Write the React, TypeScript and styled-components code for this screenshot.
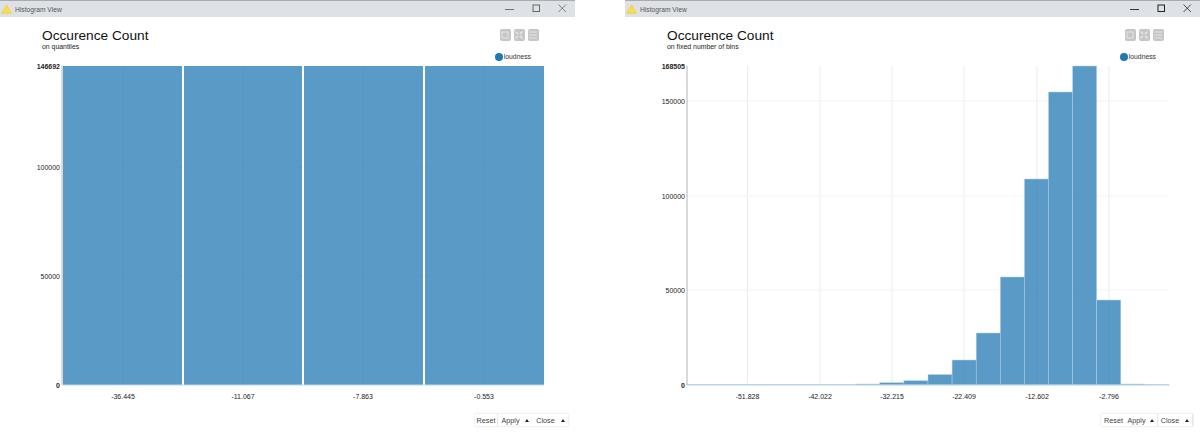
import React from 'react'
import styled, { createGlobalStyle } from 'styled-components'

type Bar = { x: number; width: number; top: number }
type Tick = { label: string; pos: number; bold?: boolean; line?: boolean }

const BOTTOM = 385

const quantileBars: Bar[] = [
    { x: 63, width: 119, top: 66 },
    { x: 184, width: 118, top: 66 },
    { x: 304, width: 119, top: 66 },
    { x: 425, width: 119, top: 66 },
]

const binTops = [384.6, 384.6, 384.6, 384.6, 384.6, 384.6, 384.6, 384, 382.7, 380.7, 374.5, 360, 333, 277, 179, 92, 66, 300, 384, 384.6]
const binBars: Bar[] = binTops.map((top, i) => ({ x: 62 + i * 24.1, width: 24.1, top }))

const charts = {
    quantiles: {
        title: 'on quantiles',
        bars: quantileBars,
        gap: true,
        gridEnd: 544,
        yTicks: [
            { label: '146692', pos: 66, bold: true },
            { label: '100000', pos: 167, line: true },
            { label: '50000', pos: 276, line: true },
            { label: '0', pos: 385, bold: true },
        ] as Tick[],
        xTicks: [
            { label: '-36.445', pos: 123 },
            { label: '-11.067', pos: 243 },
            { label: '-7.863', pos: 363 },
            { label: '-0.553', pos: 484 },
        ] as Tick[],
    },
    bins: {
        title: 'on fixed number of bins',
        bars: binBars,
        gap: false,
        gridEnd: 544,
        yTicks: [
            { label: '168505', pos: 66, bold: true },
            { label: '150000', pos: 101, line: true },
            { label: '100000', pos: 196, line: true },
            { label: '50000', pos: 290, line: true },
            { label: '0', pos: 385, bold: true },
        ] as Tick[],
        xTicks: [
            { label: '-51.828', pos: 122.5 },
            { label: '-42.022', pos: 195 },
            { label: '-32.215', pos: 267 },
            { label: '-22.409', pos: 339 },
            { label: '-12.602', pos: 412 },
            { label: '-2.796', pos: 484 },
        ] as Tick[],
    },
}

function WarningIcon() {
    return (
        <svg width="11" height="10" viewBox="0 0 11 10">
            <path d="M5.5 .8 10.4 9.3H.6Z" fill="#f7dc58" stroke="#f4d03a" strokeWidth=".8" strokeLinejoin="round" />
        </svg>
    )
}

function WindowControls({ active }: { active: boolean }) {
    const stroke = active ? '#222' : '#666'
    return (
        <Controls>
            <Control>
                <svg width="10" height="10" viewBox="0 0 10 10"><path d="M0 5.5h9" stroke={stroke} strokeWidth=".9" /></svg>
            </Control>
            <Control>
                <svg width="10" height="10" viewBox="0 0 10 10"><rect x="2" y="1" width="6.5" height="6.5" fill="none" stroke={stroke} strokeWidth="1" /></svg>
            </Control>
            <Control>
                <svg width="10" height="10" viewBox="0 0 10 10"><path d="M1.5 .5 9 8M9 .5 1.5 8" stroke={stroke} strokeWidth=".8" /></svg>
            </Control>
        </Controls>
    )
}

function Toolbox() {
    return (
        <Tools>
            <Tool>
                <svg width="8" height="8" viewBox="0 0 8 8"><rect x="1" y="1" width="6" height="6" fill="none" stroke="#e4e4e4" strokeWidth="1" /></svg>
            </Tool>
            <Tool>
                <svg width="8" height="8" viewBox="0 0 8 8"><path d="M.5 .5 3 3M7.5 .5 5 3M.5 7.5 3 5M7.5 7.5 5 5" stroke="#e8e8e8" strokeWidth="1.3" /></svg>
            </Tool>
            <Tool>
                <svg width="8" height="8" viewBox="0 0 8 8"><path d="M0 1h8M0 4h8M0 7h8" stroke="#e4e4e4" strokeWidth="1" /></svg>
            </Tool>
        </Tools>
    )
}

function Chart({ bars, gap, gridEnd, yTicks, xTicks }: { bars: Bar[]; gap: boolean; gridEnd: number; yTicks: Tick[]; xTicks: Tick[] }) {
    return (
        <Plot viewBox="0 62 575 343" width="575" height="343">
            {xTicks.map(t => (
                <line key={t.label} x1={t.pos} x2={t.pos} y1={66} y2={BOTTOM} stroke="#ececec" strokeWidth="1" />
            ))}
            {yTicks.filter(t => t.line).map(t => (
                <line key={t.label} x1={62} x2={gridEnd} y1={t.pos} y2={t.pos} stroke="#f3f3f3" strokeWidth="1" />
            ))}
            {bars.map(b => (
                <rect
                    key={b.x}
                    x={b.x}
                    y={b.top}
                    width={b.width}
                    height={BOTTOM - b.top}
                    fill="#1f77b4"
                    fillOpacity=".74"
                    stroke={gap ? 'none' : '#b4d3e9'}
                    strokeWidth=".5"
                />
            ))}
            <line x1={62} x2={62} y1={66} y2={BOTTOM} stroke="#b4b4b4" strokeWidth="1" />
            <line x1={62} x2={gridEnd} y1={BOTTOM} y2={BOTTOM} stroke="#c2d8e8" strokeWidth="1" />
            {yTicks.map(t => (
                <AxisLabel key={t.label} x={60} y={t.pos + 2.5} textAnchor="end" fontWeight={t.bold ? 700 : 400}>{t.label}</AxisLabel>
            ))}
            {xTicks.map(t => (
                <AxisLabel key={t.label} x={t.pos} y={399} textAnchor="middle">{t.label}</AxisLabel>
            ))}
        </Plot>
    )
}

function HistogramWindow({ kind, active }: { kind: 'quantiles' | 'bins'; active: boolean }) {
    const chart = charts[kind]
    return (
        <Window>
            <TitleBar>
                <WindowTitle><WarningIcon /><span>Histogram View</span></WindowTitle>
                <WindowControls active={active} />
            </TitleBar>
            <Header>
                <Headings>
                    <Title>Occurence Count</Title>
                    <Subtitle>{chart.title}</Subtitle>
                </Headings>
                <Side>
                    <Toolbox />
                    <Legend><Dot />loudness</Legend>
                </Side>
            </Header>
            <Chart bars={chart.bars} gap={chart.gap} gridEnd={chart.gridEnd} yTicks={chart.yTicks} xTicks={chart.xTicks} />
            <Footer>
                {kind === 'quantiles' ? (
                    <ButtonGroup>
                        <FootButton $w={23} $bordered>Reset</FootButton>
                        <FootButton $w={35}>Apply<Caret /></FootButton>
                        <FootButton $w={35}>Close<Caret /></FootButton>
                    </ButtonGroup>
                ) : (
                    <ButtonGroup>
                        <FootButton $w={25}>Reset</FootButton>
                        <FootButton $w={21}>Apply</FootButton>
                        <FootButton $w={11} $bordered><Caret /></FootButton>
                        <FootButton $w={24}>Close</FootButton>
                        <FootButton $w={11} $bordered><Caret /></FootButton>
                    </ButtonGroup>
                )}
            </Footer>
        </Window>
    )
}

export default function App() {
    return (
        <>
            <GlobalStyle />
            <Page>
                <HistogramWindow kind="quantiles" active={false} />
                <HistogramWindow kind="bins" active />
            </Page>
        </>
    )
}

const GlobalStyle = createGlobalStyle`
    html, body {
        margin: 0;
        background: #fff;
        overflow: hidden;
    }
    body {
        font-family: "Liberation Sans", Arial, sans-serif;
    }
`
const Page = styled.div`
    display: flex;
    justify-content: space-between;
    width: 1200px;
    height: 433px;
`
const Window = styled.div`
    display: flex;
    flex-direction: column;
    width: 575px;
    height: 433px;
`
const TitleBar = styled.div`
    display: flex;
    align-items: center;
    justify-content: space-between;
    height: 16px;
    background: #dee1e6;
    border-top: 1px solid #a9abae;
`
const WindowTitle = styled.div`
    display: flex;
    align-items: center;
    gap: 3px;
    padding-left: 1px;
    font-size: 6.7px;
    color: #555;
`
const Controls = styled.div`
    display: flex;
`
const Control = styled.div`
    display: flex;
    align-items: center;
    justify-content: center;
    width: 26px;
    height: 16px;
`
const Header = styled.div`
    display: flex;
    justify-content: space-between;
    height: 45px;
    padding: 0 37px 0 42px;
`
const Headings = styled.div`
    padding-top: 11px;
`
const Title = styled.div`
    font-size: 13.7px;
    line-height: 15px;
    color: #111;
`
const Subtitle = styled.div`
    font-size: 6.9px;
    line-height: 7px;
    color: #222;
`
const Side = styled.div`
    display: flex;
    flex-direction: column;
    align-items: flex-end;
    padding-top: 12px;
    margin-right: -1px;
`
const Tools = styled.div`
    display: flex;
    gap: 2.5px;
`
const Tool = styled.div`
    display: flex;
    align-items: center;
    justify-content: center;
    width: 11.5px;
    height: 12px;
    border-radius: 2px;
    background: #c6c6c6;
`
const Legend = styled.div`
    display: flex;
    align-items: center;
    gap: 1px;
    margin-top: 12px;
    margin-right: 8px;
    font-size: 6.8px;
    line-height: 8px;
    color: #333;
`
const Dot = styled.span`
    width: 8px;
    height: 8px;
    border-radius: 50%;
    background: #1f77b4;
`
const Plot = styled.svg`
    display: block;
    flex: none;
`
const AxisLabel = styled.text`
    font-family: "Liberation Sans", Arial, sans-serif;
    font-size: 7px;
    fill: #222;
`
const Footer = styled.div`
    display: flex;
    justify-content: flex-end;
    padding: 9px 7px 0 0;
`
const ButtonGroup = styled.div`
    display: flex;
    height: 12px;
    box-shadow: 0 0 2px rgba(0, 0, 0, .18);
`
const FootButton = styled.div<{ $w: number; $bordered?: boolean }>`
    display: flex;
    align-items: center;
    justify-content: center;
    gap: 6px;
    width: ${p => p.$w}px;
    font-size: 7.2px;
    color: #444;
    border-right: ${p => (p.$bordered ? '1px solid #e6e6e6' : 'none')};
    box-sizing: border-box;
`
const Caret = styled.span`
    width: 0;
    height: 0;
    border-left: 2.5px solid transparent;
    border-right: 2.5px solid transparent;
    border-bottom: 3px solid #222;
`
